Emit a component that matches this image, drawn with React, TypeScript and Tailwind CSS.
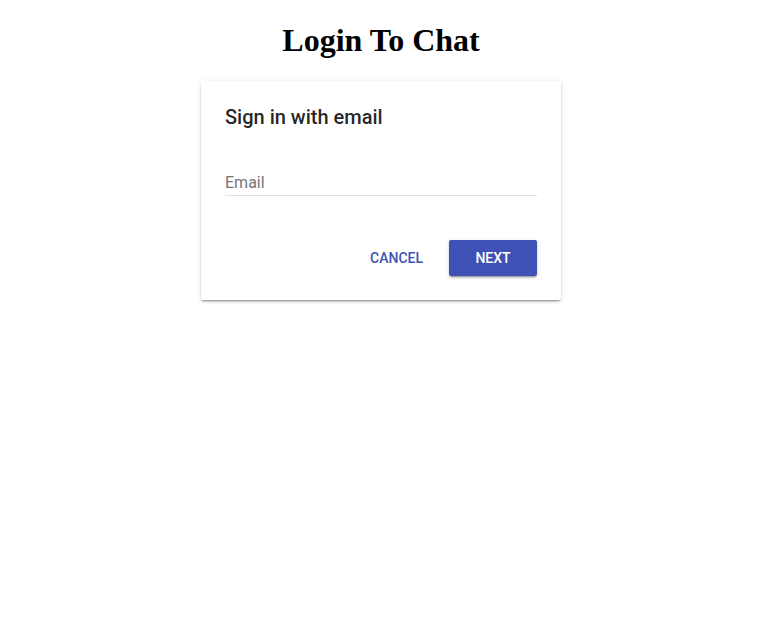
import React from "react";

export default function App() {
  return (
    <div className="min-h-[623px] w-full bg-white">
      <h1
        className="m-0 pt-[22px] text-center text-[32px] font-bold leading-[37px] text-black"
        style={{ fontFamily: '"Liberation Serif", "Times New Roman", serif' }}
      >
        Login To Chat
      </h1>
      <div
        className="mx-auto mt-[22px] w-[360px] rounded-[2px] bg-white p-6"
        style={{
          fontFamily: 'Roboto, "Liberation Sans", sans-serif',
          boxShadow:
            "0 2px 2px 0 rgba(0,0,0,.14), 0 3px 1px -2px rgba(0,0,0,.2), 0 1px 5px 0 rgba(0,0,0,.12)",
        }}
      >
        <div className="text-[20px] font-medium leading-6 text-[rgba(0,0,0,0.87)]">
          Sign in with email
        </div>
        <div className="mt-[44px] border-b border-[rgba(0,0,0,0.12)] pb-[2px]">
          <div className="text-[16px] leading-5 text-[#757575]">Email</div>
        </div>
        <div className="mt-[44px] flex justify-end">
          <button className="h-9 min-w-16 rounded-[2px] px-4 text-[14px] font-medium uppercase leading-9 text-[#3f51b5]">
            Cancel
          </button>
          <button
            className="ml-[10px] h-9 min-w-[88px] rounded-[2px] bg-[#3f51b5] px-4 text-[14px] font-medium uppercase leading-9 text-white"
            style={{
              boxShadow:
                "0 2px 2px 0 rgba(0,0,0,.14), 0 3px 1px -2px rgba(0,0,0,.2), 0 1px 5px 0 rgba(0,0,0,.12)",
            }}
          >
            Next
          </button>
        </div>
      </div>
    </div>
  );
}
